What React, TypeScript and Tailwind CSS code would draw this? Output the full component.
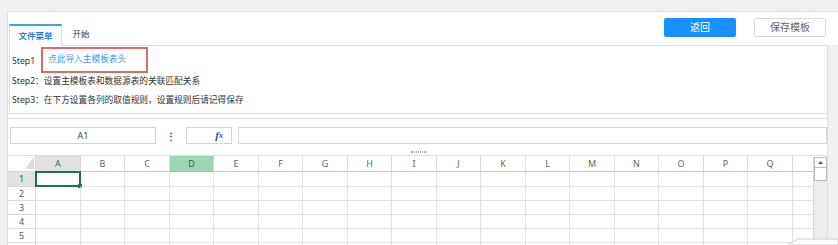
import React from "react";

const COLS = ["A", "B", "C", "D", "E", "F", "G", "H", "I", "J", "K", "L", "M", "N", "O", "P", "Q"];
const ROWS = [1, 2, 3, 4, 5, 6];

// column widths alternate 45/44 to keep the lines on whole pixels
function colW(i: number) {
  return i % 2 === 0 ? "w-[45px]" : "w-[44px]";
}

function HeaderCell({ label, i }: { label: string; i: number }) {
  const isA = label === "A";
  const isD = label === "D";
  return (
    <div
      className={`${colW(i)} flex h-full shrink-0 items-center justify-center border-r border-b text-[9px] ${
        isD
          ? "bg-[#9fd4b4] border-b-[#8ec5a4] border-r-[#d6d6d6] text-[#2f5f44]"
          : isA
          ? "bg-[#e2e2e2] border-b-[#217346] border-r-[#d6d6d6] text-[#217346]"
          : "bg-white border-b-[#c8c8c8] border-r-[#dcdcdc] text-[#666]"
      }`}
    >
      {label}
    </div>
  );
}

export default function App() {
  return (
    <div className="relative h-[245px] w-[838px] overflow-hidden bg-[#f0f0f0] font-['Noto_Sans','Noto_Sans_CJK_SC',sans-serif] text-[#333]">
      <div className="h-[11px]" />

      {/* top bar: tabs + buttons */}
      <div className="ml-[7px] flex h-[34px] border-l border-t border-[#dedede] bg-white">
        <div className="flex items-end pl-px">
          <div className="relative z-10 -mb-px flex h-[22px] w-[53px] items-center justify-center border-x border-t-2 border-x-[#dcdcdc] border-t-[#3d9ff2] bg-white text-[8.5px] font-bold text-[#2d7fd3]">
            文件菜单
          </div>
          <div className="flex h-[21px] w-[38px] items-center justify-center text-[8.5px] text-[#333]">开始</div>
        </div>
        <div className="ml-auto mr-[12px] mt-[6px] flex gap-[18px]">
          <button className="h-[19px] w-[72px] rounded-[2px] bg-[#1890ff] text-[10px] text-white">返回</button>
          <button className="h-[19px] w-[72px] rounded-[2px] border border-[#d9d9d9] bg-white text-[10px] text-[#666]">
            保存模板
          </button>
        </div>
      </div>

      <div className="ml-[7px] w-[821px] border-l border-r border-[#dedede] bg-white">
        {/* steps */}
        <div className="ml-px flex h-[69px] w-[819px] flex-col border border-[#dcdcdc] text-[8.7px]">
          <div className="flex h-[28px] items-start pl-[2px]">
            <span className="mt-[9px] w-[29px]">Step1</span>
            <div className="mt-px flex h-[26px] w-[107px] items-center border-2 border-[#e36868] pl-[5px] text-[#3d9be9]">
              点此导入主模板表头
            </div>
          </div>
          <div className="flex h-[16px] items-center pl-[2px]">Step2：设置主模板表和数据源表的关联匹配关系</div>
          <div className="flex h-[22px] items-center pl-[2px]">Step3：在下方设置各列的取值规则，设置规则后请记得保存</div>
        </div>

        <div className="h-[4px]" />

        {/* formula bar */}
        <div className="relative flex h-[38px] items-start border-y border-[#dedede] pt-[8px]">
          <div className="ml-[2px] flex h-[17px] w-[146px] items-center justify-center border border-[#d4d4d4] text-[9px] text-[#444]">
            A1
          </div>
          <div className="flex h-[17px] w-[30px] items-center justify-center text-[10px] font-bold leading-none text-[#444]">
            ⋮
          </div>
          <div className="flex h-[17px] w-[46px] items-center justify-end border border-[#d4d4d4] pr-[8px] font-['Liberation_Serif',serif] text-[11px] font-bold italic leading-none text-[#2b4f8a]">
            f<span className="text-[8px]">x</span>
          </div>
          <div className="ml-[6px] h-[17px] w-[589px] border border-[#d4d4d4]" />
          <div className="absolute bottom-[2px] left-[403px] h-[2px] w-[16px] border-y border-dotted border-[#a8a8a8]" />
        </div>

        {/* sheet */}
        <div className="relative flex">
          <div className="flex flex-col">
            <div className="flex h-[16px]">
              <div className="relative h-full w-[28px] shrink-0 border-b border-r border-[#d6d6d6] bg-white">
                <svg className="absolute bottom-[2px] right-[1px]" width="9" height="12" viewBox="0 0 9 12">
                  <polygon points="9,0 9,12 0,12" fill="#dcdcdc" />
                </svg>
              </div>
              {COLS.map((c, i) => (
                <HeaderCell key={c} label={c} i={i} />
              ))}
              <div className="h-full w-[20px] shrink-0 border-b border-[#c8c8c8]" />
            </div>
            {ROWS.map((r) => (
              <div key={r} className={`flex ${r === 1 ? "h-[15px]" : "h-[14px]"}`}>
                <div
                  className={`flex h-full w-[28px] shrink-0 items-center justify-center border-b border-r text-[9px] ${
                    r === 1
                      ? "bg-[#e2e2e2] border-r-[#217346] border-b-[#d6d6d6] text-[#217346]"
                      : "bg-white border-[#dcdcdc] text-[#555]"
                  }`}
                >
                  {r < 6 ? r : ""}
                </div>
                {COLS.map((c, i) => (
                  <div key={c} className={`${colW(i)} relative h-full shrink-0 border-b border-r border-[#e2e2e2]`}>
                    {r === 1 && c === "A" && (
                      <div className="absolute -left-px -top-px h-[16px] w-[46px] border-2 border-[#217346]">
                        <div className="absolute -bottom-[3px] -right-[3px] h-[4px] w-[4px] bg-[#217346]" />
                      </div>
                    )}
                  </div>
                ))}
                <div className="h-full w-[20px] shrink-0 border-b border-[#e2e2e2]" />
              </div>
            ))}
          </div>

          {/* vertical scrollbar */}
          <div className="mt-px flex w-[14px] flex-col border-l border-[#d6d6d6] bg-[#ececec]">
            <div className="flex h-[11px] items-center justify-center border border-[#bdbdbd] bg-white">
              <svg width="5" height="3" viewBox="0 0 5 3">
                <polygon points="2.5,0 5,3 0,3" fill="#555" />
              </svg>
            </div>
            <div className="h-[13px] border-x border-b border-[#bdbdbd] bg-white" />
          </div>
        </div>
      </div>

      {/* sheet tab corner at the bottom right */}
      <svg className="absolute bottom-0 right-0" width="50" height="7" viewBox="0 0 50 7">
        <path d="M0 7 L10 1 L50 1 L50 7 Z" fill="#ffffff" stroke="#cfcfcf" strokeWidth="1" />
      </svg>
    </div>
  );
}
